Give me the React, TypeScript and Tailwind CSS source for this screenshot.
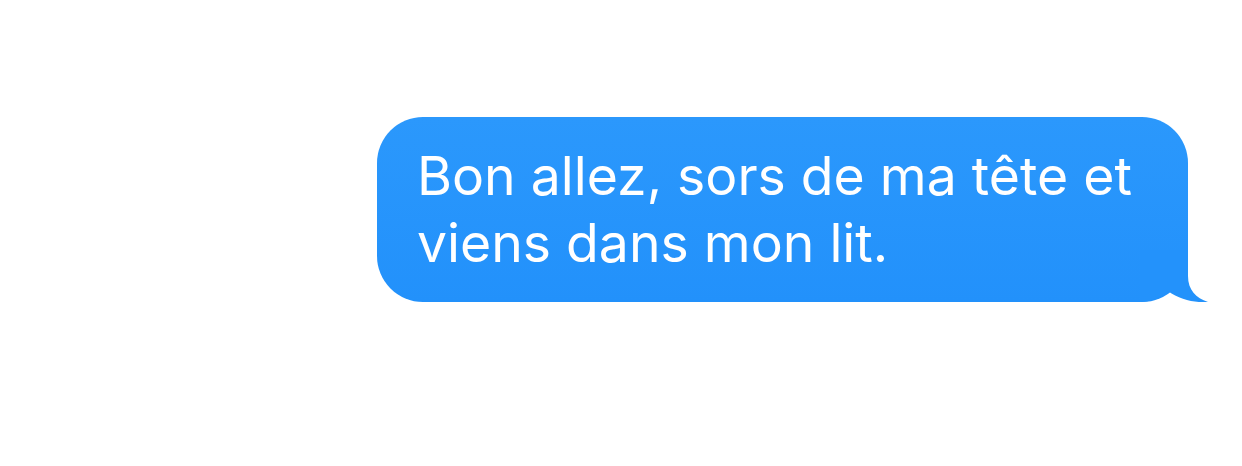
import React from "react";

const Tail = () => (
  <svg
    className="absolute -right-[22px] bottom-0"
    width="70"
    height="52"
    viewBox="0 0 70 52"
  >
    <path
      d="M0,0 L48,0 L48,26 C48,40 56,48 68,52 C56,53 40,50 28,41 C20,47 10,52 0,52 Z"
      fill="#2392fb"
    />
  </svg>
);

const App = () => {
  return (
    <div className="w-[1242px] h-[466px] bg-white pt-[117px] pl-[377px]">
      <div className="relative w-[811px] h-[185px] rounded-[46px] bg-linear-to-b from-[#2b98fc] to-[#2291fb] pl-[40px] pt-[25px]">
        <p className="font-['Inter','Liberation_Sans',sans-serif] text-[53.5px] leading-[67px] text-white">
          Bon allez, sors de ma tête et
          <br />
          viens dans mon lit.
        </p>
        <Tail />
      </div>
    </div>
  );
};

export default App;
